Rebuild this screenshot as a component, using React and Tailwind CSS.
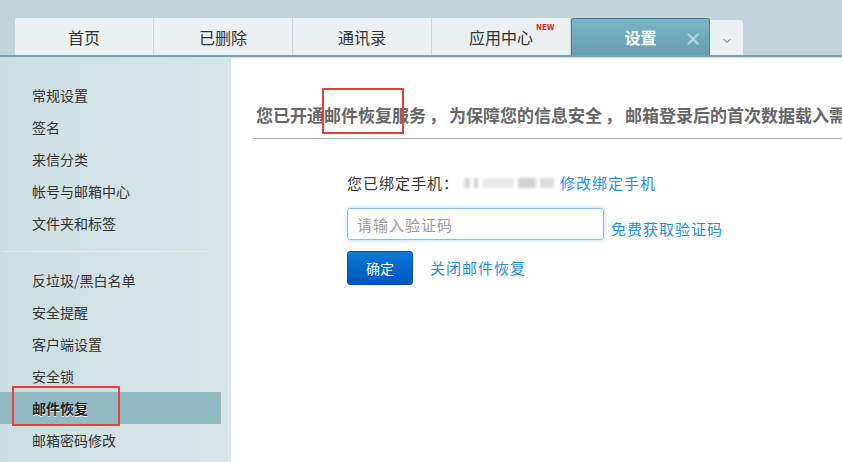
import { ChevronDown } from 'lucide-react'

const tabs = ['首页', '已删除', '通讯录', '应用中心']

const groupA = ['常规设置', '签名', '来信分类', '帐号与邮箱中心', '文件夹和标签']
const groupB = ['反垃圾/黑白名单', '安全提醒', '客户端设置', '安全锁', '邮件恢复', '邮箱密码修改']

function SideItem({ label }) {
  const active = label === '邮件恢复'
  return (
    <div
      className={
        active
          ? 'relative h-[32px] w-[221px] bg-[#91bac4] pl-[32px] text-[14px] leading-[32px] font-bold text-[#222] [text-shadow:0_1px_0_#fff]'
          : 'h-[32px] pl-[32px] text-[14px] leading-[32px] text-[#333]'
      }
    >
      {label}
      {active && (
        <div className="absolute left-[12px] top-[-6px] h-[40px] w-[108px] border-2 border-[#f23a3a]" />
      )}
    </div>
  )
}

export default function App() {
  return (
    <div className="flex h-[462px] w-[842px] flex-col overflow-hidden bg-white font-['Microsoft_YaHei','Noto_Sans_CJK_SC',sans-serif]">
      {/* Header tabs */}
      <div className="flex h-[55px] shrink-0 items-end bg-[#c1d4d9] pl-[15px]">
        {tabs.map((t, i) => (
          <div
            key={t}
            className="relative flex h-[37px] w-[139px] items-center justify-center border-r border-[#c9d8dc] bg-[#ebf0f2] text-[16px] text-[#333] first:rounded-tl-[3px]"
          >
            {t}
            {i === 3 && (
              <span className="absolute left-[104px] top-[5px] text-[8px] font-bold leading-none text-[#e0141e]">
                NEW
              </span>
            )}
          </div>
        ))}
        <div className="relative flex h-[37px] w-[139px] items-center justify-center rounded-t-[3px] border border-b-0 border-[#3b84a0] bg-gradient-to-b from-[#7db6c6] to-[#659dae] text-[16px] font-bold text-white">
          设置
          <span className="absolute right-[7px] top-[6px] text-[18px] font-bold text-[#b8d8e1]">×</span>
        </div>
        <div className="flex h-[35px] w-[33px] items-end justify-center rounded-tr-[3px] bg-[#ebf0f2] pb-[8px]">
          <ChevronDown className="h-[12px] w-[12px] text-[#666]" strokeWidth={2} />
        </div>
      </div>
      <div className="h-[2px] shrink-0 bg-[#6fa5b5]" />
      <div className="h-px shrink-0 bg-[#d5dcde]" />

      <div className="flex min-h-0 flex-1">
        {/* Sidebar */}
        <aside className="w-[231px] shrink-0 bg-gradient-to-r from-[#cddfe2] to-[#d8e6e8] pt-[21px]">
          {groupA.map((l) => (
            <SideItem key={l} label={l} />
          ))}
          <div className="mx-[3px] my-[12px] h-px w-[204px] bg-[#e6edee]" />
          {groupB.map((l) => (
            <SideItem key={l} label={l} />
          ))}
        </aside>

        {/* Content */}
        <main className="min-w-0 flex-1 pt-[45px]">
          <div className="relative ml-[23px] border-b border-[#aaaaaa] pb-[11px] pl-[2px]">
            <p className="whitespace-nowrap text-[17px] font-bold leading-[24px] text-[#666]">
              您已开通邮件恢复服务<span className="mx-[3px]">，</span>为保障您的信息安全<span className="mx-[3px]">，</span>邮箱登录后的首次数据载入需要验证手机
            </p>
            <div className="absolute left-[68px] top-[-15px] h-[46px] w-[82px] border-2 border-[#f23a3a]" />
          </div>

          <div className="ml-[116px] mt-[32px]">
            <div className="flex h-[24px] items-center text-[15px] tracking-[1px] text-[#333]">
              <span>您已绑定手机：</span>
              <span className="ml-[5px] flex h-[12px] items-center gap-[4px] blur-[1.5px]">
                <span className="h-[10px] w-[6px] bg-[#d4d4d4]" />
                <span className="h-[10px] w-[4px] bg-[#cccccc]" />
                <span className="h-[10px] w-[32px] bg-[#ebebeb]" />
                <span className="h-[10px] w-[18px] bg-[#d0d0d0]" />
                <span className="h-[10px] w-[14px] bg-[#dddddd]" />
              </span>
              <a className="ml-[6px] text-[#1f8ce0]">修改绑定手机</a>
            </div>

            <div className="mt-[13px] flex items-end">
              <input
                className="h-[32px] w-[257px] rounded-[3px] border border-[#86bdf0] px-[9px] text-[15px] tracking-[1px] text-[#333] shadow-[0_0_4px_rgba(110,175,240,0.55)] outline-none placeholder:text-[#9a9a9a]"
                placeholder="请输入验证码"
              />
              <a className="ml-[7px] text-[15px] leading-[22px] tracking-[1px] text-[#1f8ce0]">免费获取验证码</a>
            </div>

            <div className="mt-[11px] flex items-center">
              <button className="h-[34px] w-[66px] rounded-[3px] border border-[#0053ad] bg-gradient-to-b from-[#0b7ad8] to-[#0055b9] text-[14px] text-white">
                确定
              </button>
              <a className="ml-[17px] text-[15px] tracking-[1px] text-[#1f8ce0]">关闭邮件恢复</a>
            </div>
          </div>
        </main>
      </div>
    </div>
  )
}
